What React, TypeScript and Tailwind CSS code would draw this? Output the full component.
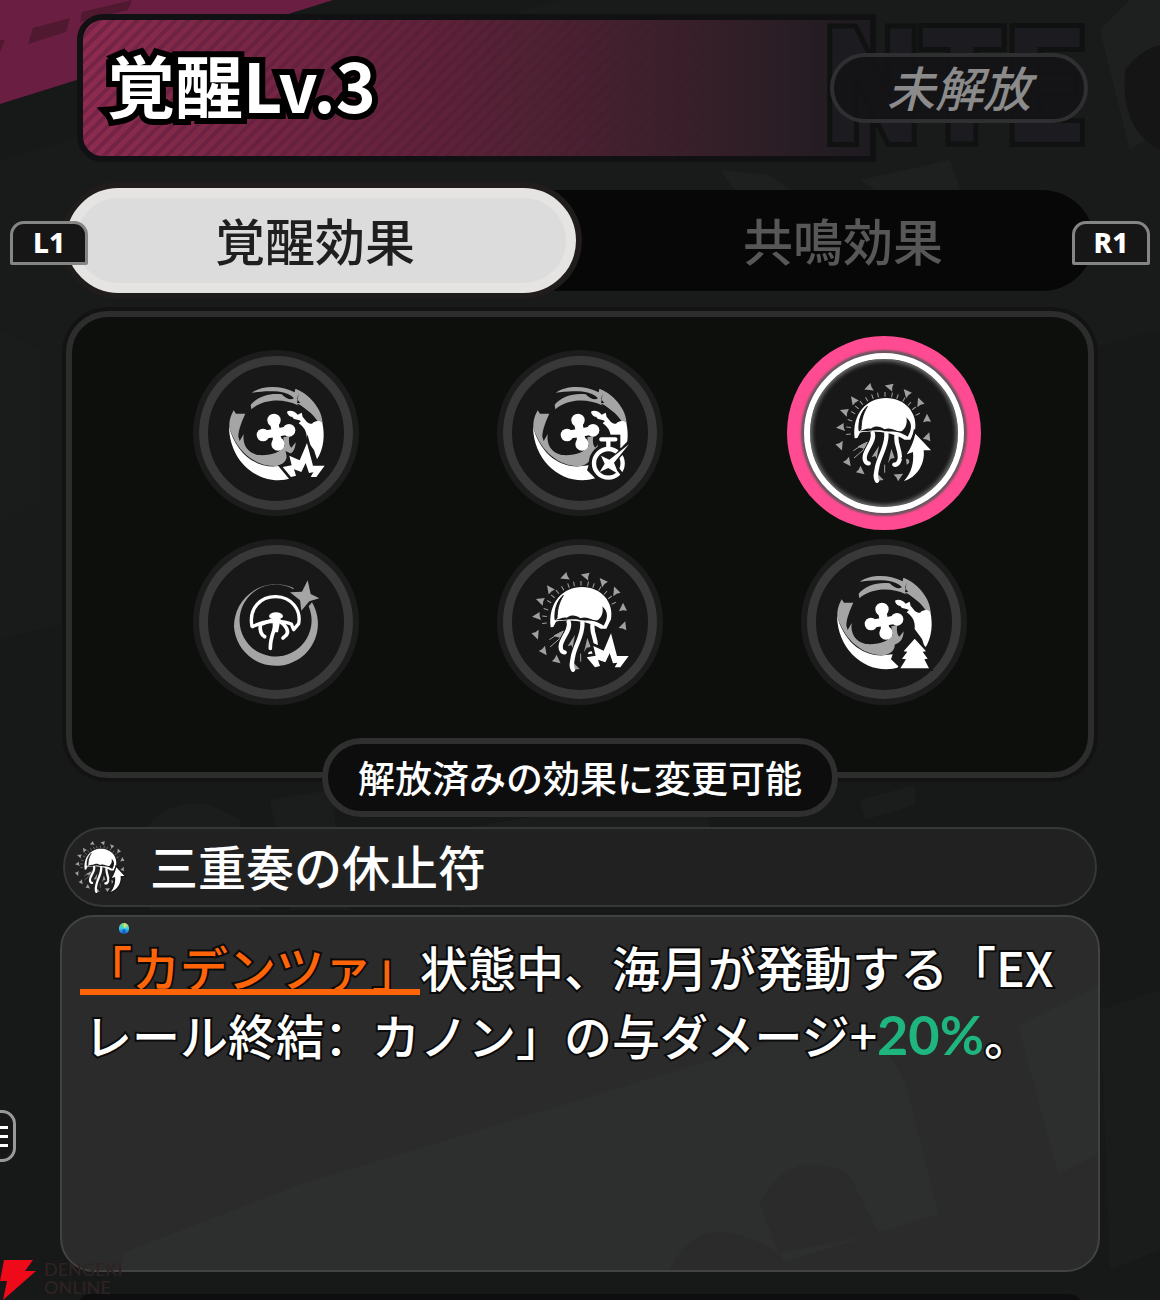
import { useState } from 'react'
import type { ReactNode } from 'react'

const JP = "font-['Noto_Sans_CJK_JP',sans-serif]"

const DARTS = [
  [266, 174, 250], [328, 170, 285], [380, 188, 320], [419, 216, 340], [441, 265, 0],
  [443, 320, 20], [182, 292, 265], [193, 245, 290], [221, 210, 325], [181, 348, 160],
  [204, 397, 145], [243, 424, 130], [298, 445, 110], [357, 438, 60],
]

const RAYS = [-95, -84, -73, -60, -50, -40, -30, -20, -11, 0, 11, 20, 31, 42, 52, 63]

function Spark() {
  const d =
    'M351 309 L369 377 L404 377 L379 411 L362 411 L370 397 L357 399 L347 369 L334 396 L312 388 L318 407 L303 411 L278 381 L305 376 L298 347 L329 361 Z'
  return (
    <g>
      <path d={d} fill="#181818" stroke="#181818" strokeWidth="16" />
      <path d={d} fill="#fff" />
    </g>
  )
}

function Stopwatch() {
  return (
    <g transform="translate(3 0)">
      <circle cx="340" cy="370" r="59" fill="#181818" />
      <path d="M308 284h68v42h-68z" fill="#181818" />
      <circle cx="340" cy="370" r="43" fill="none" stroke="#fff" strokeWidth="13" />
      <path d="M319 298h42M340 298v28" stroke="#fff" strokeWidth="13" strokeLinecap="round" />
      <path d="M340 376 L404 310" stroke="#181818" strokeWidth="18" />
      <path d="M365 382 L385 408" stroke="#181818" strokeWidth="9" />
      <path d="M402 313 L357 368 L371 403 L340 384 L314 396 L329 371 L318 347 L343 359 Z" fill="#fff" />
    </g>
  )
}

function Tree() {
  const d =
    'M350 329 L384 367 L374 368 L389 389 L379 391 L393 418 L307 418 L324 391 L312 389 L328 368 L317 367 Z'
  return (
    <g>
      <path d={d} fill="#181818" stroke="#181818" strokeWidth="16" />
      <path d={d} fill="#fff" />
    </g>
  )
}

function Swirl({ children }: { children: ReactNode }) {
  return (
    <svg viewBox="108 129 300 300" className="relative h-[100px] w-[100px]" aria-hidden="true">
      <path
        d="M185 158 C215 137 270 134 314 157 L316 146 L325 150 C362 168 396 208 398 250 L383 244 C368 220 345 203 322 195 C280 176 224 175 184 208 L182 194 C202 170 240 158 275 163 C290 178 304 181 311 175 C299 158 264 153 238 154 C217 154 201 157 185 158 Z"
        fill="#a5a5a5"
      />
      <path d="M279 162 C292 161 304 167 311 174 C301 179 288 174 279 162 Z M326 160 L321 178 L331 188 L321 190" fill="#181818" />
      <path d="M323 193 C340 201 355 216 367 239" fill="none" stroke="#181818" strokeWidth="4" />
      <path
        d="M291 215 C300 209 315 214 323 224 L335 218 L338 231 C347 240 353 254 366 251 C374 242 388 240 397 248 C405 285 402 325 381 358 L372 330 L350 300 C353 275 340 259 326 250 L333 243 C323 237 314 242 307 231 C298 229 292 224 291 215 Z"
        fill="#fff"
      />
      <path
        d="M131 211 L138 221 L166 221 C158 238 145 268 145 290 L149 303 L161 282 C157 313 171 338 203 345 C243 348 270 337 284 318 L280 292 L298 289 C295 306 298 318 304 323 L317 307 C316 332 305 342 290 347 C291 361 281 372 262 378 C201 382 142 339 118 263 C117 240 124 224 131 211 Z"
        fill="#a5a5a5"
      />
      <path d="M117 260 C136 333 190 383 258 379 L284 376 L279 391 L304 415 C215 442 119 372 117 260 Z" fill="#fff" />
      <path d="M252 243 L264 312 M219 285 L297 271" stroke="#fff" strokeWidth="25" />
      <g fill="#fff">
        <circle cx="252" cy="241" r="20" />
        <circle cx="297" cy="271" r="19" />
        <circle cx="264" cy="312" r="20" />
        <circle cx="219" cy="285" r="19" />
      </g>
      {children}
    </svg>
  )
}

function ArrowUp() {
  const d = 'M406 311 L453 361 L431 361 C436 402 410 443 372 453 C395 428 402 398 399 366 L380 373 C393 354 401 333 406 311 Z'
  return (
    <g>
      <path d={d} fill="#181818" stroke="#181818" strokeWidth="14" />
      <path d={d} fill="#fff" />
    </g>
  )
}

function Jellyfish({ className, children }: { className: string; children: ReactNode }) {
  return (
    <svg viewBox="162 159 300 300" className={className} aria-hidden="true">
      {DARTS.map(([x, y, angle]) => (
        <path
          key={`${x}-${y}`}
          d="M0 -14 L12 10 L0 9 L-12 12 Z"
          transform={`translate(${x} ${y}) rotate(${angle})`}
          fill="#a0a0a0"
        />
      ))}
      {RAYS.map((angle) => (
        <path key={angle} d="M0 -103 V-117" transform={`translate(315 303) rotate(${angle})`} stroke="#a0a0a0" strokeWidth="3" />
      ))}
      <path d="M222 384 L252 358 M220 362 L254 340 M314 404 V428 M235 350 L262 336 L252 355 Z" stroke="#a0a0a0" strokeWidth="3" fill="#a0a0a0" />
      <path d="M297 347 L275 382 L286 378 L290 386 Z M334 356 L324 400 L332 386 L344 384 Z M378 386 C390 386 392 400 380 404" fill="#a0a0a0" />
      <path
        d="M224 325 C215 250 262 204 318 204 C376 204 414 250 405 301 L391 329 L374 329 C340 307 280 300 240 308 L232 324 Z"
        fill="#fff"
      />
      <path d="M237 302 C235 271 243 246 262 229 C246 256 244 276 243 298 Z" fill="#181818" stroke="#181818" strokeWidth="3" />
      <path
        d="M236 304 C253 299 260 294 272 296 C287 286 301 289 313 298 C335 288 350 308 366 303 C380 292 382 277 379 262 C400 281 394 302 383 320 C360 304 340 303 318 305 C296 297 280 303 262 303 Z"
        fill="#181818"
      />
      <path
        d="M278 309 C286 334 253 360 254 384 C254 396 261 401 266 400 M319 310 C323 345 300 374 292 408 C288 430 284 442 291 452 M350 315 C344 342 364 362 359 388 C356 399 350 405 343 404"
        fill="none"
        stroke="#fff"
        strokeWidth="13"
        strokeLinecap="round"
      />
      {children}
    </svg>
  )
}

function Crescent() {
  return (
    <svg viewBox="108 109 300 300" className="relative h-[100px] w-[100px]" aria-hidden="true">
      <path
        d="M132 273 A126 126 0 0 1 312 158 L309 160 A108 108 0 1 0 356 212 L366 200 A126 126 0 1 1 132 273 Z"
        fill="#a5a5a5"
      />
      <path d="M353 134 L362 175 L388 188 L358 197 L334 225 L330 194 L300 170 L336 168 Z" fill="#a5a5a5" />
      <path
        d="M186 272 C175 216 214 182 258 183 C304 184 334 222 326 264 L311 282 L304 265 C285 258 273 255 258 258 C235 256 210 261 188 273 Z"
        fill="none"
        stroke="#fff"
        strokeWidth="10"
        strokeLinejoin="round"
      />
      <path d="M244 254 L211 267 C209 282 211 295 224 303 M260 250 C258 278 240 300 241 338 M270 257 C282 266 300 284 289 298 L279 307" fill="none" stroke="#fff" strokeWidth="11" strokeLinecap="round" />
      <ellipse cx="258" cy="241" rx="21" ry="11" fill="#fff" />
      <path d="M248 250 h24 l-8 40 h-16 Z" fill="#fff" />
    </svg>
  )
}

const EFFECTS = [
  { name: '覚醒効果 1', icon: <Swirl><Spark /></Swirl> },
  { name: '覚醒効果 2', icon: <Swirl><Stopwatch /></Swirl> },
  { name: '三重奏の休止符', icon: <Jellyfish className="relative h-[100px] w-[100px]"><ArrowUp /></Jellyfish> },
  { name: '覚醒効果 4', icon: <Crescent /> },
  {
    name: '覚醒効果 5',
    icon: (
      <Jellyfish className="relative h-[100px] w-[100px]">
        <g transform="translate(54 34)"><Spark /></g>
      </Jellyfish>
    ),
  },
  { name: '覚醒効果 6', icon: <Swirl><Tree /></Swirl> },
]

function Backdrop() {
  return (
    <svg
      viewBox="0 0 1160 1300"
      preserveAspectRatio="none"
      className="absolute inset-0 h-full w-full"
      aria-hidden="true"
    >
      <path d="M0 160 L560 0 H1160 V330 L0 640 Z" fill="#191b1a" />
      <path d="M0 0 H333 L0 104 Z" fill="#6a1e42" />
      <path d="M33 28 L70 18 L66 32 L28 44 Z M82 12 L132 0 L128 10 L80 22 Z M0 40 L5 40 L0 52 Z" fill="#501930" />
      <path d="M1100 30 L1130 0 L1160 0 V130 L1130 150 Z M720 170 L770 175 L790 190 H735 Z M860 180 L950 160 L960 190 H875 Z" fill="#1d201f" />
      <path d="M1125 70 Q1140 50 1160 45 V150 Q1120 130 1125 70 Z" fill="#151515" />
      <path d="M140 835 Q180 780 240 820 L260 910 H150 Z M270 800 L330 790 L350 910 H290 Z M450 830 L700 790 L720 860 L460 910 Z M860 800 L915 785 V805 L865 820 Z" fill="#1b1d1c" />
      <path d="M1100 1010 L1160 990 V1250 L1110 1270 Z M0 330 L40 350 V500 L0 520 Z" fill="#1a1c1b" />
      <path d="M80 1300 Q82 1294 92 1294 H1068 Q1078 1294 1080 1300 Z" fill="#0e0e11" />
    </svg>
  )
}

function BumperKey({ label, className }: { label: string; className: string }) {
  return (
    <kbd
      className={`absolute top-[33px] flex h-[44px] w-[78px] items-center justify-center rounded-t-[14px] rounded-b-[2px] border-[3px] border-[#858585] bg-[#161616] pb-[2px] font-['Noto_Sans',sans-serif] text-[28px] leading-none font-extrabold text-white ${className}`}
    >
      {label}
    </kbd>
  )
}

export default function App() {
  const [tab, setTab] = useState(0)
  const [selected, setSelected] = useState(2)

  return (
    <main lang="ja" className={`relative flex min-h-screen flex-col overflow-hidden bg-[#171818] pt-[14px] pb-7 ${JP}`}>
      <Backdrop />

      {/* ── Header ── */}
      <header className="relative mr-[72px] ml-[77px] flex h-[148px] items-stretch">
        <div className="relative flex flex-1 items-center overflow-hidden rounded-l-[26px] border-[6px] border-[#111012] bg-linear-to-r from-[#8e2b4f] via-[#5f2139] via-45% to-[#1d1b20] pb-2 pl-6">
          <div className="absolute inset-0 bg-[repeating-linear-gradient(-45deg,rgba(20,10,40,0.2)_0_4px,transparent_4px_9px)] mask-r-from-0% mask-r-to-80%" />
          <h1 className="relative text-[68px] leading-none font-bold text-white [-webkit-text-stroke:12px_#000] [paint-order:stroke]">
            覚醒Lv.3
          </h1>
        </div>
        <span
          className="absolute right-1 bottom-0 font-['Liberation_Sans_Narrow','Roboto_Condensed','Liberation_Sans',sans-serif] text-[160px] leading-[148px] font-bold text-[#1c1b20] [-webkit-text-stroke:10px_#101211] [paint-order:stroke]"
          aria-hidden="true"
        >
          NTE
        </span>
        <div className="relative -ml-[46px] flex w-[258px] items-center">
          <div className="flex h-[70px] w-full items-center justify-center rounded-full border-4 border-[#2f2f31] bg-[#141416]/90 pb-1 text-[48px] leading-none font-medium text-[#8b8b8b] italic">
            未解放
          </div>
        </div>
      </header>

      {/* ── Tabs ── */}
      <nav className="relative mt-[26px] px-[66px]">
        <div role="tablist" className="grid h-[105px] grid-cols-2 rounded-full bg-[#070707] bg-clip-content py-[2px]">
          {['覚醒効果', '共鳴効果'].map((label, i) => (
            <button
              key={label}
              type="button"
              role="tab"
              aria-selected={tab === i}
              onClick={() => setTab(i)}
              className={
                tab === i
                  ? '-my-[2px] mr-1 rounded-full border-[10px] border-[#e5e4e3] bg-[#dcdcdc] pr-3 pb-1 text-[50px] leading-none font-medium text-[#1f1f1f] shadow-[0_0_0_6px_#1f1c1b]'
                  : 'rounded-full pb-1 pl-3 text-[50px] leading-none font-medium text-[#575757]'
              }
            >
              {label}
            </button>
          ))}
        </div>
        <BumperKey label="L1" className="left-[10px]" />
        <BumperKey label="R1" className="right-[10px]" />
      </nav>

      {/* ── Effect picker ── */}
      <section className="relative mx-[66px] mt-[18px] rounded-[42px] border-[6px] border-[#2d2d2e] bg-[#0d0f0d] px-[52px] pt-[21px] pb-[56px] shadow-[0_0_0_4px_#131313]">
        <div className="grid grid-cols-3">
          {EFFECTS.map((effect, i) => (
            <div key={effect.name} className="flex h-[189px] items-center justify-center">
              <button
                type="button"
                aria-label={effect.name}
                aria-pressed={selected === i}
                onClick={() => setSelected(i)}
                className={
                  selected === i
                    ? '-my-1 flex h-[194px] w-[194px] items-center justify-center rounded-full bg-[#ff4b91] p-[17px]'
                    : 'flex h-[166px] w-[166px] items-center justify-center rounded-full bg-[#1c1c1c] p-[6px]'
                }
              >
                <span
                  className={
                    selected === i
                      ? 'flex h-full w-full items-center justify-center rounded-full border-[6px] border-white bg-[#181818] shadow-[0_0_2px_3px_#6b5560,inset_0_0_4px_2px_#777]'
                      : 'flex h-full w-full items-center justify-center rounded-full border-[9px] border-[#383838] bg-[#181818]'
                  }
                >
                  {effect.icon}
                </span>
              </button>
            </div>
          ))}
        </div>
      </section>
      <p className="relative -mt-10 flex h-[79px] items-center self-center rounded-full border-[6px] border-[#2f2f2f] bg-[#0d0d0e] px-[30px] text-[37px] leading-none font-medium text-white">
        解放済みの効果に変更可能
      </p>

      {/* ── Selected effect ── */}
      <div className="relative mx-[63px] mt-[10px] flex h-[80px] items-center gap-6 rounded-full border-2 border-[#363737] bg-[#212121] pl-[9px]">
        <Jellyfish className="h-[52px] w-[52px] shrink-0"><ArrowUp /></Jellyfish>
        <h2 className="pb-1 text-[48px] leading-none font-medium text-white">三重奏の休止符</h2>
      </div>
      <article className="relative mx-[60px] mt-2 flex-1 overflow-hidden rounded-[34px] border-2 border-[#414242] bg-[#2b2b2b] px-[22px] pt-[15px]">
        <svg viewBox="0 0 1040 357" preserveAspectRatio="none" className="absolute inset-0 h-full w-full" aria-hidden="true">
          <path d="M60 340 L240 270 L760 112 Q830 110 850 180 L880 300 L700 357 H60 Z M960 110 L1040 70 V240 L1000 260 Z" fill="#2d2f2f" />
          <path d="M700 290 Q730 230 790 260 L820 320 L720 340 Z M610 357 Q640 290 720 340 L730 357 Z" fill="#2b2b2b" />
        </svg>
        <i className="absolute top-[6px] left-[57px] h-[11px] w-[10px] rounded-full bg-[conic-gradient(#f6e85a,#35d0e8,#1650c8,#35c8f0,#7be07a)]" />
        <p className="relative text-[48px] leading-[68px] font-medium text-white [-webkit-text-stroke:4px_#0b0b0b] [paint-order:stroke]">
          <a
            href="#cadenza"
            className="relative inline-block text-[#ff6408] after:absolute after:right-0 after:bottom-[5px] after:-left-1 after:h-[6px] after:bg-[#ff6408]"
          >
            「カデンツァ」
          </a>
          状態中、海月が発動する「EXレール終結<span className="font-['Noto_Sans_CJK_SC',sans-serif]" lang="zh-CN">：</span>カノン」の与ダメージ+
          <strong className="font-['Lato',sans-serif] text-[54px] leading-none font-bold text-[#1fb57e] [-webkit-text-stroke:0px]">20%</strong>。
        </p>
      </article>

      {/* ── Side handle ── */}
      <button
        type="button"
        aria-label="メニュー"
        className="absolute top-[1110px] -left-[35px] flex h-[52px] w-[51px] flex-col items-end justify-center gap-[6px] rounded-[14px] border-[3px] border-[#999] bg-[#171717] pr-[5px]"
      >
        <i className="h-[3px] w-5 bg-white" />
        <i className="h-[3px] w-5 bg-white" />
        <i className="h-[3px] w-5 bg-white" />
      </button>

      <div className="absolute bottom-0 left-0 flex items-start gap-2 font-['Lato',sans-serif] text-[18px] leading-[18px] font-medium text-[#2e2322]">
        <svg viewBox="0 0 36 40" className="h-[40px] w-[36px]" aria-hidden="true">
          <path d="M4 0 H33 L25 11 H36 L3 40 L7 21 H0 Z" fill="#ee0a18" />
        </svg>
        <span>
          DENGEKI
          <br />
          ONLINE
        </span>
      </div>
    </main>
  )
}
